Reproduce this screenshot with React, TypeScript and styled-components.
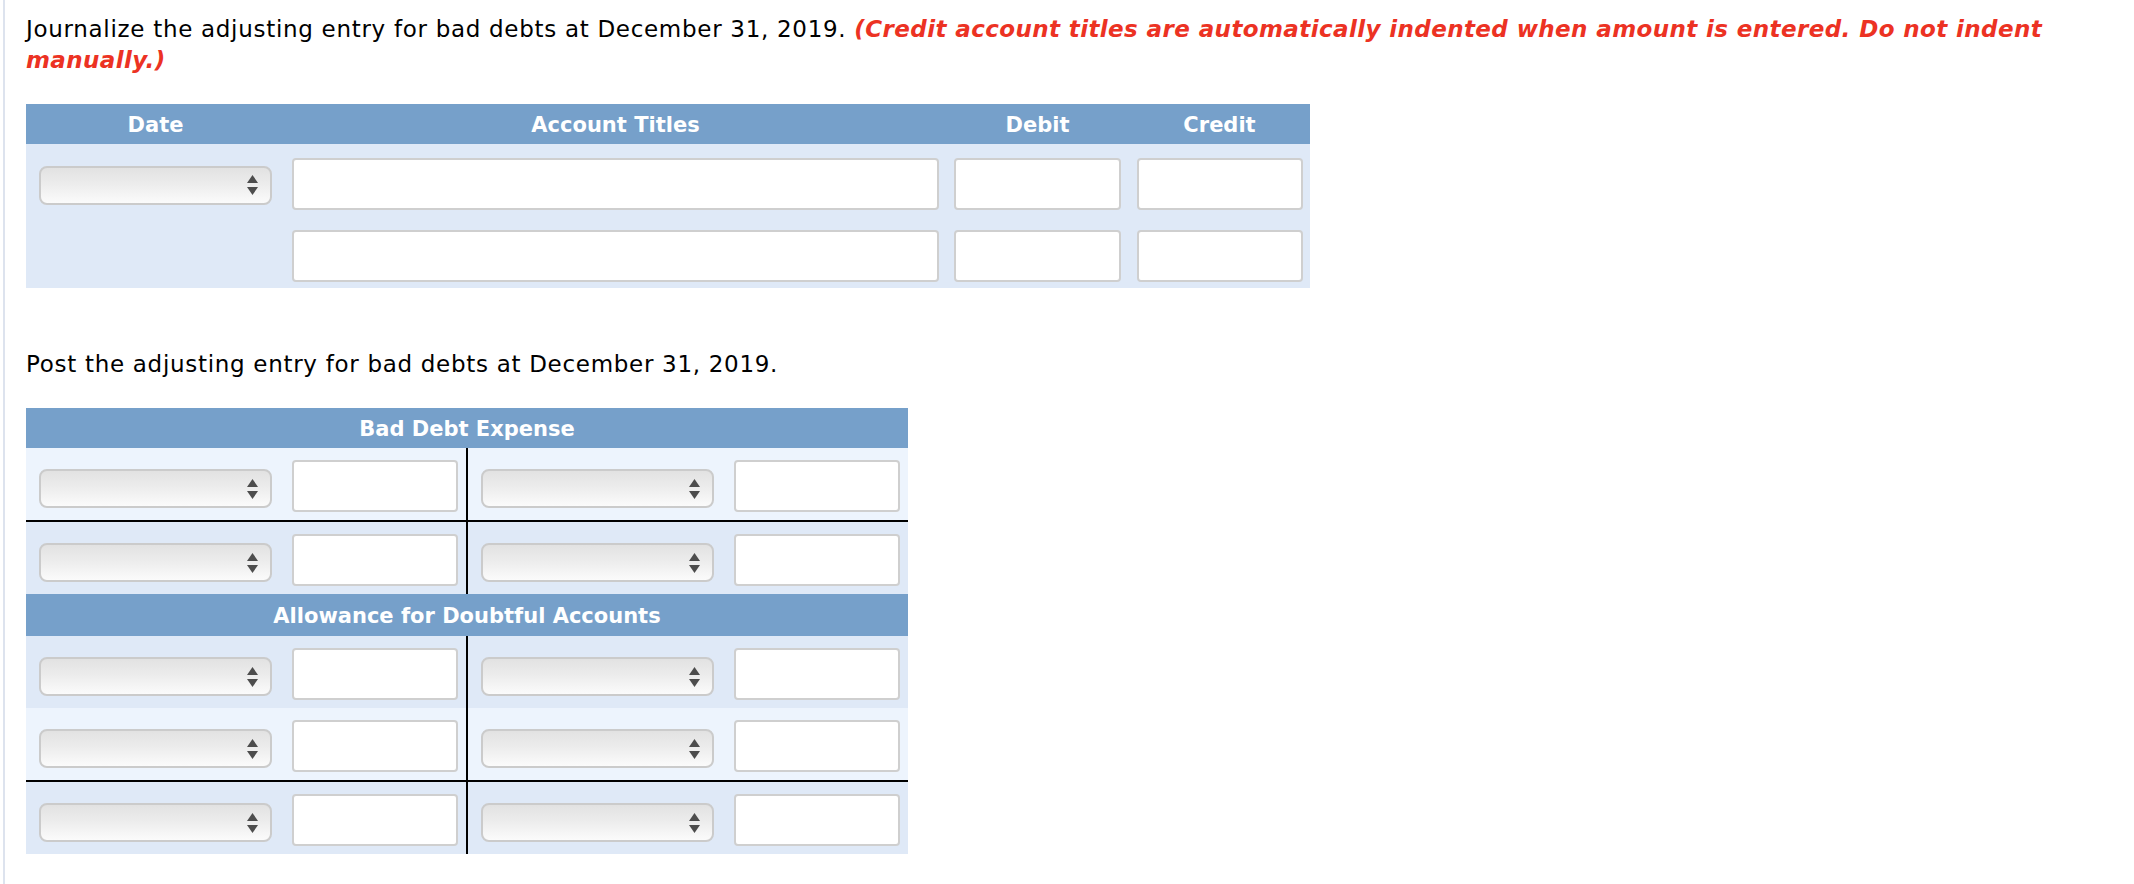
import React from "react";
import styled, { createGlobalStyle } from "styled-components";

const GlobalStyle = createGlobalStyle`
  html, body {
    margin: 0;
    padding: 0;
    background: #ffffff;
  }
  body {
    font-family: "DejaVu Sans", Verdana, sans-serif;
    color: #000000;
  }
  * { box-sizing: border-box; }
`;

const Page = styled.div`
  margin-left: 3px;
  border-left: 2px solid #dde3ee;
  min-height: 884px;
  padding: 14px 20px 0 21px;
`;

const Prompt = styled.p<{ $gap?: number }>`
  margin: ${(p) => p.$gap ?? 0}px 0 28px 0;
  font-size: 23px;
  line-height: 31px;
  letter-spacing: 0.7px;
`;

const Hint = styled.span`
  color: #ec3223;
  font-weight: bold;
  font-style: italic;
  letter-spacing: 0.4px;
`;

const JournalTable = styled.div`
  width: 1284px;
  background: #dfe9f7;
`;

const JournalGrid = styled.div`
  display: grid;
  grid-template-columns: 259px 661px 183px 181px;
`;

const HeaderRow = styled(JournalGrid)`
  height: 40px;
  background: #76a0ca;
`;

const HeadCell = styled.div`
  display: flex;
  align-items: center;
  justify-content: center;
  color: #ffffff;
  font-weight: bold;
  font-size: 21px;
  padding-top: 2px;
`;

const JournalRow = styled(JournalGrid)`
  height: 72px;
  padding-top: 7px;
  align-items: center;
`;

const Cell = styled.div<{ $padL?: number; $padR?: number }>`
  display: flex;
  align-items: center;
  padding-left: ${(p) => p.$padL ?? 7}px;
  padding-right: ${(p) => p.$padR ?? 7}px;
`;

const TextBox = styled.div<{ $w?: number }>`
  width: ${(p) => (p.$w ? `${p.$w}px` : "100%")};
  height: 52px;
  background: #ffffff;
  border: 2px solid #cfcfcf;
  border-radius: 4px;
  flex: none;
`;

const Dropdown = styled.div<{ $w?: number; $shift?: number }>`
  width: ${(p) => p.$w ?? 233}px;
  height: 39px;
  margin-top: ${(p) => p.$shift ?? 0}px;
  flex: none;
  border: 2px solid #cbcbcb;
  border-radius: 8px;
  background: linear-gradient(to bottom, #e2e2e2 0%, #ececec 45%, #fbfbfb 100%);
  display: flex;
  align-items: center;
  justify-content: flex-end;
  padding-right: 12px;
`;

const Arrows = () => (
  <svg width="11" height="20" viewBox="0 0 11 20" aria-hidden="true">
    <polygon points="0,8 5.5,0 11,8" fill="#4d4d4d" />
    <polygon points="0,12 11,12 5.5,20" fill="#4d4d4d" />
  </svg>
);

const Select: React.FC<{ shift?: number }> = ({ shift }) => (
  <Dropdown $shift={shift}>
    <Arrows />
  </Dropdown>
);

const TAccount = styled.div`
  width: 882px;
`;

const TTitle = styled.div<{ $h: number }>`
  height: ${(p) => p.$h}px;
  background: #76a0ca;
  color: #ffffff;
  font-weight: bold;
  font-size: 21px;
  display: flex;
  align-items: center;
  justify-content: center;
  padding-top: 2px;
`;

const TRow = styled.div<{ $light?: boolean; $divider?: boolean }>`
  display: grid;
  grid-template-columns: 442px 440px;
  height: ${(p) => (p.$divider ? 74 : 72)}px;
  background: ${(p) => (p.$light ? "#edf4fd" : "#dfe9f7")};
  border-bottom: ${(p) => (p.$divider ? "2px solid #000000" : "none")};
`;

const TSide = styled.div<{ $left?: boolean }>`
  display: flex;
  align-items: center;
  gap: 20px;
  padding: 4px 7px 0 13px;
  border-right: ${(p) => (p.$left ? "2px solid #000000" : "none")};
`;

const TRowView: React.FC<{ light?: boolean; divider?: boolean }> = ({ light, divider }) => (
  <TRow $light={light} $divider={divider}>
    <TSide $left>
      <Select shift={5} />
      <TextBox $w={166} />
    </TSide>
    <TSide>
      <Select shift={5} />
      <TextBox $w={166} />
    </TSide>
  </TRow>
);

export default function App() {
  return (
    <>
      <GlobalStyle />
      <Page>
        <Prompt>
          Journalize the adjusting entry for bad debts at December 31, 2019.{" "}
          <Hint>
            (Credit account titles are automatically indented when amount is entered. Do not indent
            manually.)
          </Hint>
        </Prompt>

        <JournalTable>
          <HeaderRow>
            <HeadCell>Date</HeadCell>
            <HeadCell>Account Titles</HeadCell>
            <HeadCell>Debit</HeadCell>
            <HeadCell>Credit</HeadCell>
          </HeaderRow>
          <JournalRow>
            <Cell $padL={13} $padR={13}>
              <Select shift={3} />
            </Cell>
            <Cell>
              <TextBox />
            </Cell>
            <Cell $padL={8} $padR={8}>
              <TextBox />
            </Cell>
            <Cell $padL={8} $padR={7}>
              <TextBox />
            </Cell>
          </JournalRow>
          <JournalRow>
            <Cell $padL={13} $padR={13} />
            <Cell>
              <TextBox />
            </Cell>
            <Cell $padL={8} $padR={8}>
              <TextBox />
            </Cell>
            <Cell $padL={8} $padR={7}>
              <TextBox />
            </Cell>
          </JournalRow>
        </JournalTable>

        <Prompt $gap={61}>Post the adjusting entry for bad debts at December 31, 2019.</Prompt>

        <TAccount>
          <TTitle $h={40}>Bad Debt Expense</TTitle>
          <TRowView light divider />
          <TRowView />
          <TTitle $h={42}>Allowance for Doubtful Accounts</TTitle>
          <TRowView />
          <TRowView light divider />
          <TRowView />
        </TAccount>
      </Page>
    </>
  );
}
